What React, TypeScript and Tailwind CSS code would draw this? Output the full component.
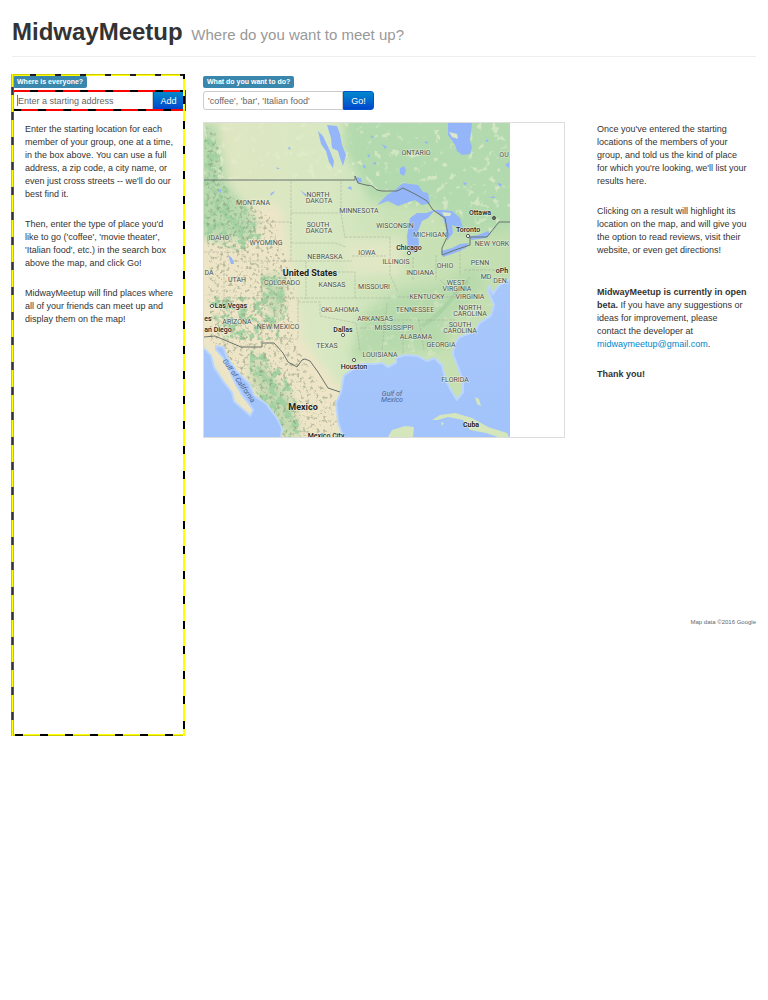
import React from "react";

type Label = { t: string; x: number; y: number; kind?: "city" | "country" };

const labels: Label[] = [
  { t: "ONTARIO", x: 416, y: 155 },
  { t: "OU", x: 504, y: 157 },
  { t: "MONTANA", x: 253, y: 205 },
  { t: "NORTH", x: 318, y: 197 },
  { t: "DAKOTA", x: 319, y: 203 },
  { t: "MINNESOTA", x: 359, y: 213 },
  { t: "SOUTH", x: 318, y: 227 },
  { t: "DAKOTA", x: 319, y: 233 },
  { t: "WISCONSIN", x: 395, y: 228 },
  { t: "MICHIGAN", x: 430, y: 237 },
  { t: "IDAHO", x: 219, y: 240 },
  { t: "WYOMING", x: 266, y: 245 },
  { t: "NEBRASKA", x: 325, y: 259 },
  { t: "IOWA", x: 367, y: 255 },
  { t: "ILLINOIS", x: 396, y: 264 },
  { t: "INDIANA", x: 420, y: 275 },
  { t: "OHIO", x: 445, y: 268 },
  { t: "PENN", x: 480, y: 265 },
  { t: "NEW YORK", x: 492, y: 246 },
  { t: "DA", x: 209, y: 275 },
  { t: "UTAH", x: 237, y: 282 },
  { t: "COLORADO", x: 282, y: 285 },
  { t: "KANSAS", x: 332, y: 287 },
  { t: "MISSOURI", x: 374, y: 289 },
  { t: "WEST", x: 456, y: 285 },
  { t: "VIRGINIA", x: 457, y: 291 },
  { t: "KENTUCKY", x: 427, y: 299 },
  { t: "VIRGINIA", x: 470, y: 299 },
  { t: "MD", x: 486, y: 279 },
  { t: "DEN.", x: 501, y: 283 },
  { t: "NORTH", x: 470, y: 310 },
  { t: "CAROLINA", x: 470, y: 316 },
  { t: "SOUTH", x: 460, y: 327 },
  { t: "CAROLINA", x: 460, y: 333 },
  { t: "TENNESSEE", x: 415, y: 312 },
  { t: "OKLAHOMA", x: 340, y: 312 },
  { t: "ARKANSAS", x: 375, y: 321 },
  { t: "MISSISSIPPI", x: 394, y: 330 },
  { t: "ALABAMA", x: 416, y: 339 },
  { t: "GEORGIA", x: 441, y: 347 },
  { t: "ARIZONA", x: 237, y: 324 },
  { t: "NEW MEXICO", x: 278, y: 329 },
  { t: "TEXAS", x: 327, y: 348 },
  { t: "LOUISIANA", x: 380, y: 357 },
  { t: "FLORIDA", x: 455, y: 382 },
  { t: "Ottawa", x: 480, y: 215, kind: "city" },
  { t: "Toronto", x: 468, y: 232, kind: "city" },
  { t: "Chicago", x: 409, y: 250, kind: "city" },
  { t: "oPh", x: 502, y: 273, kind: "city" },
  { t: "Las Vegas", x: 231, y: 308, kind: "city" },
  { t: "an Diego", x: 218, y: 332, kind: "city" },
  { t: "es", x: 208, y: 321, kind: "city" },
  { t: "Dallas", x: 343, y: 332, kind: "city" },
  { t: "Houston", x: 354, y: 369, kind: "city" },
  { t: "Mexico City", x: 326, y: 438, kind: "city" },
  { t: "Cuba", x: 471, y: 427, kind: "country" },
  { t: "United States", x: 310, y: 276, kind: "country" },
  { t: "Mexico", x: 303, y: 410, kind: "country" },
];

const cities: [number, number][] = [
  [494, 218], [468, 236], [409, 253], [212, 306], [343, 335], [354, 360],
];

const land =
  "M204 123H510V278L498 285L493 292L489 283L487 291L493 305L490 315L478 323L475 330L458 337L453 345L452 355L457 367L462 382L462 392L457 398L452 390L446 378L443 365L435 357L427 360L418 355L405 354L395 357L395 362L388 366L383 362L374 363L360 363L343 375L340 392L335 403L337 422L342 437H282L283 428L278 418L267 403L255 395L250 383L237 370L228 357L224 346L215 345L215 350L222 358L228 370L235 385L242 397L247 403L252 410L250 414L235 401L233 392L225 382L215 367L212 355L204 347Z";

const lakes = [
  "M377 205L387 195L395 190L403 183L418 185L423 192L428 193L430 203L422 205L415 200L406 203L398 206L388 201Z",
  "M410 218L417 213L426 213L435 210L428 218L422 221L418 231L419 246L415 253L408 250L407 236Z",
  "M433 210L442 210L452 211L460 218L463 228L457 227L452 225L453 233L447 241L446 228L443 218Z",
  "M441 251L452 248L460 244L469 243L466 248L455 253L443 257Z",
  "M467 237L478 235L488 231L490 234L486 238L472 240Z",
  "M448 123L448 135L455 145L457 151L462 155L470 154L472 147L470 141L472 123Z",
  "M400 168L404 166L406 170L404 176L400 174Z",
  "M327 125L337 126L340 134L342 145L346 155L343 166L340 158L338 151L332 148L331 138Z",
  "M318 131L323 136L330 151L334 161L333 168L329 162L326 151L321 144Z",
  "M228 255L232 258L234 264L231 264Z",
  "M356 177L361 178L362 182L357 183Z",
  "M271 193L275 191L273 194L270 196Z",
];

const border =
  "M204 180H355V176L358 183L366 185L372 186L377 190L382 191H397L403 188L415 194L427 201L433 210L445 218L448 235L442 248V255L455 250L470 245V237H487L499 222H510";
const southBorder =
  "M204 337L215 336L241 347H262V343H274L283 353L288 362L297 367L302 360L305 359L310 361L318 372L328 388L334 390L340 392";
const stateLines =
  "M291 181V224M204 252H238M242 222V260M242 222H291V261H242M291 213H341M341 181V213L345 238M291 243H335L346 247M306 261V299M291 261H352M306 272H355V298H306M262 261V299M224 298H306M262 299V343M298 299V339H274M298 302H320V316L356 323M224 261V298L218 318M345 237H390M352 256H386M355 298H390M356 323L360 350M360 328H387M387 303L382 350M390 237V275L398 292M403 322V353M419 320L424 350M393 320H455M398 297H480M413 257V280M436 255V280M460 250V275M464 270H495M440 280L455 294L470 277";

function MapDrawing() {
  return (
    <svg
      className="block h-[314px] w-[306px] max-w-full"
      viewBox="204 123 306 314"
      role="img"
      aria-label="Map of the United States"
      fontFamily="Roboto, sans-serif"
    >
      <defs>
        <clipPath id="land"><path d={land} /></clipPath>
        <linearGradient id="ground" x1="0" x2="1" y1="0" y2="0">
          <stop offset="0" stopColor="#dfe6c1" />
          <stop offset=".4" stopColor="#d8e8c2" />
          <stop offset=".6" stopColor="#cbe2b8" />
          <stop offset="1" stopColor="#c2deb0" />
        </linearGradient>
        <linearGradient id="sea" x1="0" x2="0" y1="0" y2="1">
          <stop offset="0" stopColor="#adccfc" />
          <stop offset="1" stopColor="#a2c3fb" />
        </linearGradient>
        <filter id="soft" x="-20%" y="-20%" width="140%" height="140%"><feGaussianBlur stdDeviation="5" /></filter>
        <filter id="forest" x="0" y="0" width="100%" height="100%" colorInterpolationFilters="sRGB">
          <feTurbulence type="fractalNoise" baseFrequency=".13" numOctaves="4" seed="7" />
          <feColorMatrix values="0 0 0 0 .64  0 0 0 0 .82  0 0 0 0 .63  7 0 0 0 -3.3" result="n" />
          <feComposite in="n" in2="SourceGraphic" operator="in" />
        </filter>
        <filter id="relief" x="0" y="0" width="100%" height="100%" colorInterpolationFilters="sRGB">
          <feTurbulence type="fractalNoise" baseFrequency=".3" numOctaves="3" seed="3" />
          <feColorMatrix values="0 0 0 0 .5  0 0 0 0 .57  0 0 0 0 .46  5 0 0 0 -2.7" result="n" />
          <feComposite in="n" in2="SourceGraphic" operator="in" />
        </filter>
        <filter id="clearing" x="0" y="0" width="100%" height="100%" colorInterpolationFilters="sRGB">
          <feTurbulence type="fractalNoise" baseFrequency=".12" numOctaves="4" seed="19" />
          <feColorMatrix values="0 0 0 0 .89  0 0 0 0 .93  0 0 0 0 .81  0 9 0 0 -5.6" result="n" />
          <feComposite in="n" in2="SourceGraphic" operator="in" />
        </filter>
      </defs>
      <rect x="204" y="123" width="306" height="314" fill="url(#sea)" />
      <path d={land} fill="none" stroke="#bcd5fc" strokeWidth="4" />
      <path d={land} fill="url(#ground)" />
      <g clipPath="url(#land)">
        <g filter="url(#soft)">
          <path d="M190 210L280 205L292 270L302 340L345 395L340 450H270L190 330Z" fill="#eee5c7" />
          <path d="M345 110H520V225L500 232L455 234L440 210L370 200L358 175L344 150Z" fill="#b3daae" />
          <path d="M195 123H216L228 185L258 222L250 240L218 238L195 240Z" fill="#b7d9ae" />
          <path d="M362 315L400 290L440 285L475 265L485 285L445 325L450 350L380 355L350 360Z" fill="#b7daac" />
          <path d="M265 275H284L282 320L268 310Z" fill="#bed8af" />
          <path d="M253 350L292 398L300 437H285L250 378Z" fill="#c3d9ae" />
          <path d="M341 238H402V276H346Z" fill="#dfe7c5" />
        </g>
        <path d="M204 130L218 145L224 185L250 210L262 238L240 252L204 240ZM260 275L286 270L284 320L265 316ZM250 350L270 355L296 395L300 437H284L250 383ZM204 295L290 300L278 340H224Z" fill="white" filter="url(#forest)" />
        <path d="M204 125L216 133L226 190L275 220L294 290L292 340L320 385L338 400V437H280L210 340Z" fill="white" filter="url(#relief)" opacity=".5" />
        <path d="M204 123H510V235L445 230L358 180H204Z" fill="white" filter="url(#clearing)" opacity=".65" />
        <path d="M360 290H500V363H360Z" fill="white" filter="url(#clearing)" opacity=".4" />
        <path d="M422 326C436 318 444 308 452 298S464 286 468 281" fill="none" stroke="#9bc79a" strokeWidth="4" opacity=".45" />
        <path d={stateLines} fill="none" stroke="#9da796" strokeWidth=".6" strokeDasharray="3 1" opacity=".75" />
      </g>
      <g fill="#94b6f8">{lakes.map((d) => <path key={d} d={d} />)}</g>
      <path d="M449 132L457 134L458 139L452 137ZM442 212L451 213L450 216L444 216Z" fill="#dbe8c9" />
      <g fill="#94b6f8">
        <path d="M288 147l3 1-2 2zM276 167l4 2h-3zM218 191l3-2v4zM367 154l3 1-1 3zM372 163l4-1v3zM382 144l5 3-2 2zM371 135l3 2-3 1zM463 182l4 1-2 3zM497 183l5 1-2 3zM489 198l5-2 1 2zM505 165l4-3v6zM486 139l3 2-3 1zM424 142l4-1-1 3zM362 166l3-1 1 4zM347 188l4-2 1 4zM300 190l7 5-1 2zM318 210v6" />
      </g>
      <g fill="#d5e6bd">
        <path d="M388 437L392 430L405 426L414 427L413 437Z" />
        <path d="M432 420L440 415L455 413L472 418L488 427L507 433L509 437H498L486 433L470 430L463 420L448 417L438 420Z" />
        <path d="M441 422l3 1-2 3zM475 397l4 2 2 7-4-2zM482 384l3 3zM491 402l2 3zM497 411l3 2zM472 385l4 1" />
      </g>
      <path d={border} fill="none" stroke="#69736c" strokeWidth="1" />
      <path d={southBorder} fill="none" stroke="#69736c" strokeWidth="1" />
      {cities.map(([x, y]) => (
        <circle key={`${x}-${y}`} cx={x} cy={y} r="1.6" fill="#fff" stroke="#333" strokeWidth=".8" />
      ))}
      <circle cx="494" cy="218" r=".9" fill="#222" />
      <g textAnchor="middle" stroke="#f3f6e8" strokeWidth="1.2" strokeOpacity=".65" paintOrder="stroke" strokeLinejoin="round">
        {labels.map((l, i) => (
          <text
            key={i}
            x={l.x}
            y={l.y}
            fontSize={l.kind === "country" ? (l.t === "Cuba" ? 7 : 9) : 7}
            fontWeight={l.kind === "country" ? 700 : l.kind === "city" ? 500 : 400}
            fill={l.kind ? "#222" : "#4b514b"}
          >
            {l.t}
          </text>
        ))}
      </g>
      <g textAnchor="middle" fill="#4c6694" fontSize="7" fontStyle="italic">
        <text x="392" y="396">Gulf of</text>
        <text x="392" y="402">Mexico</text>
        <text transform="translate(237 382) rotate(55)">Gulf of California</text>
      </g>
    </svg>
  );
}

function Field({ id, label, placeholder, action, caret }: {
  id: string; label: string; placeholder: string; action: string; caret?: boolean;
}) {
  return (
    <form onSubmit={(e) => e.preventDefault()}>
      <label htmlFor={id} className="block h-3 w-fit rounded-[2px] bg-[#3a87ad] px-1 text-[7px] leading-3 font-bold text-white">
        {label}
      </label>
      <div className="relative mt-[3px] flex h-[19px]">
        <input
          id={id}
          placeholder={placeholder}
          className="w-[140px] min-w-0 rounded-l-[3px] border border-[#ccc] bg-white px-1 text-[9px] leading-3 text-[#555] outline-none placeholder:text-[#666] placeholder:opacity-100"
        />
        {caret && <span className="absolute top-1 left-1 h-[11px] w-px bg-[#777]" />}
        <button className="w-[31px] rounded-r-[3px] border border-[#0055cc] bg-linear-to-b from-[#0088cc] to-[#0044cc] text-[9px] leading-3 text-white">
          {action}
        </button>
      </div>
    </form>
  );
}

export default function App() {
  return (
    <div className="min-h-screen bg-white px-3 font-['Liberation_Sans',Arial,sans-serif] text-[9px] leading-[13px] text-[#333]">
      <header className="border-b border-[#eee] pt-4 pb-[5px]">
        <h1 className="text-[24px] leading-8 font-bold">
          MidwayMeetup <small className="ml-[2px] text-[15px] font-normal text-[#999]">Where do you want to meet up?</small>
        </h1>
      </header>

      <main className="mt-[17px] grid grid-cols-[173fr_362fr_173fr] gap-x-[18px]">
        <section className="relative -ml-px min-h-[662px] pt-[2px]">
          <div className="pl-[2px]">
            <Field id="address" label="Where is everyone?" placeholder="Enter a starting address" action="Add" caret />
          </div>
          <div className="mt-[13px] flex flex-col gap-[17px] pl-[14px] whitespace-nowrap">
            <p>
              Enter the starting location for each<br />member of your group, one at a time,<br />in the box above. You can use a full<br />address, a zip code, a city name, or<br />even just cross streets -- we'll do our<br />best find it.
            </p>
            <p>
              Then, enter the type of place you'd<br />like to go ('coffee', 'movie theater',<br />'Italian food', etc.) in the search box<br />above the map, and click Go!
            </p>
            <p>
              MidwayMeetup will find places where<br />all of your friends can meet up and<br />display them on the map!
            </p>
          </div>

          <div className="pointer-events-none absolute inset-x-0 top-4 -mr-px h-[21px]">
            <div className="absolute inset-x-0 top-0 h-[2px] bg-[repeating-linear-gradient(90deg,#f00_0_2px,#000_2px_10px,#f00_10px_25px)] bg-[position:17px_0]" />
            <div className="absolute inset-x-0 bottom-0 h-[2px] bg-[repeating-linear-gradient(90deg,#f00_0_2px,#000_2px_10px,#f00_10px_25px)]" />
            <div className="absolute inset-y-0 right-0 w-[2px] bg-[#e00000]" />
          </div>
          <div className="pointer-events-none absolute inset-0">
            <div className="absolute inset-x-0 top-0 h-[2px] bg-[repeating-linear-gradient(90deg,#ff0_0_19px,#222_19px_25px)] shadow-[inset_0_1px_rgba(0,0,0,0.2)]" />
            <div className="absolute inset-x-0 bottom-0 h-[2px] bg-[repeating-linear-gradient(90deg,#ff0_0_4px,#000_4px_12px,#ff0_12px_25px)] shadow-[inset_0_-1px_rgba(0,0,0,0.2)]" />
            <div className="absolute inset-y-0 left-0 w-[3px] bg-[repeating-linear-gradient(180deg,#ff0_0_13px,#333_13px_21px,#ff0_21px_25px)] shadow-[inset_1px_0_rgba(128,128,128,0.5),inset_-1px_0_rgba(128,128,128,0.5)]" />
            <div className="absolute inset-y-0 right-0 w-[2px] bg-[repeating-linear-gradient(180deg,#000_0_5px,#ff0_5px_22px,#000_22px_25px)]" />
          </div>
        </section>

        <section className="pt-[2px]">
          <Field id="activity" label="What do you want to do?" placeholder="'coffee', 'bar', 'Italian food'" action="Go!" />
          <div className="mt-3 border border-[#ddd]">
            <MapDrawing />
          </div>
        </section>

        <aside className="flex flex-col">
          <div className="flex flex-col gap-[17px] pt-[49px] pl-[14px] whitespace-nowrap">
            <p>
              Once you've entered the starting<br />locations of the members of your<br />group, and told us the kind of place<br />for which you're looking, we'll list your<br />results here.
            </p>
            <p>
              Clicking on a result will highlight its<br />location on the map, and will give you<br />the option to read reviews, visit their<br />website, or even get directions!
            </p>
            <p className="mt-3">
              <strong>MidwayMeetup is currently in open<br />beta.</strong> If you have any suggestions or<br />ideas for improvement, please<br />contact the developer at<br />
              <a href="mailto:midwaymeetup@gmail.com" className="text-[#08c]">midwaymeetup@gmail.com</a>.
            </p>
            <p className="font-bold">Thank you!</p>
          </div>
          <p className="mt-[235px] text-right text-[6px] leading-3 text-[#666]">Map data ©2016 Google</p>
        </aside>
      </main>
    </div>
  );
}
